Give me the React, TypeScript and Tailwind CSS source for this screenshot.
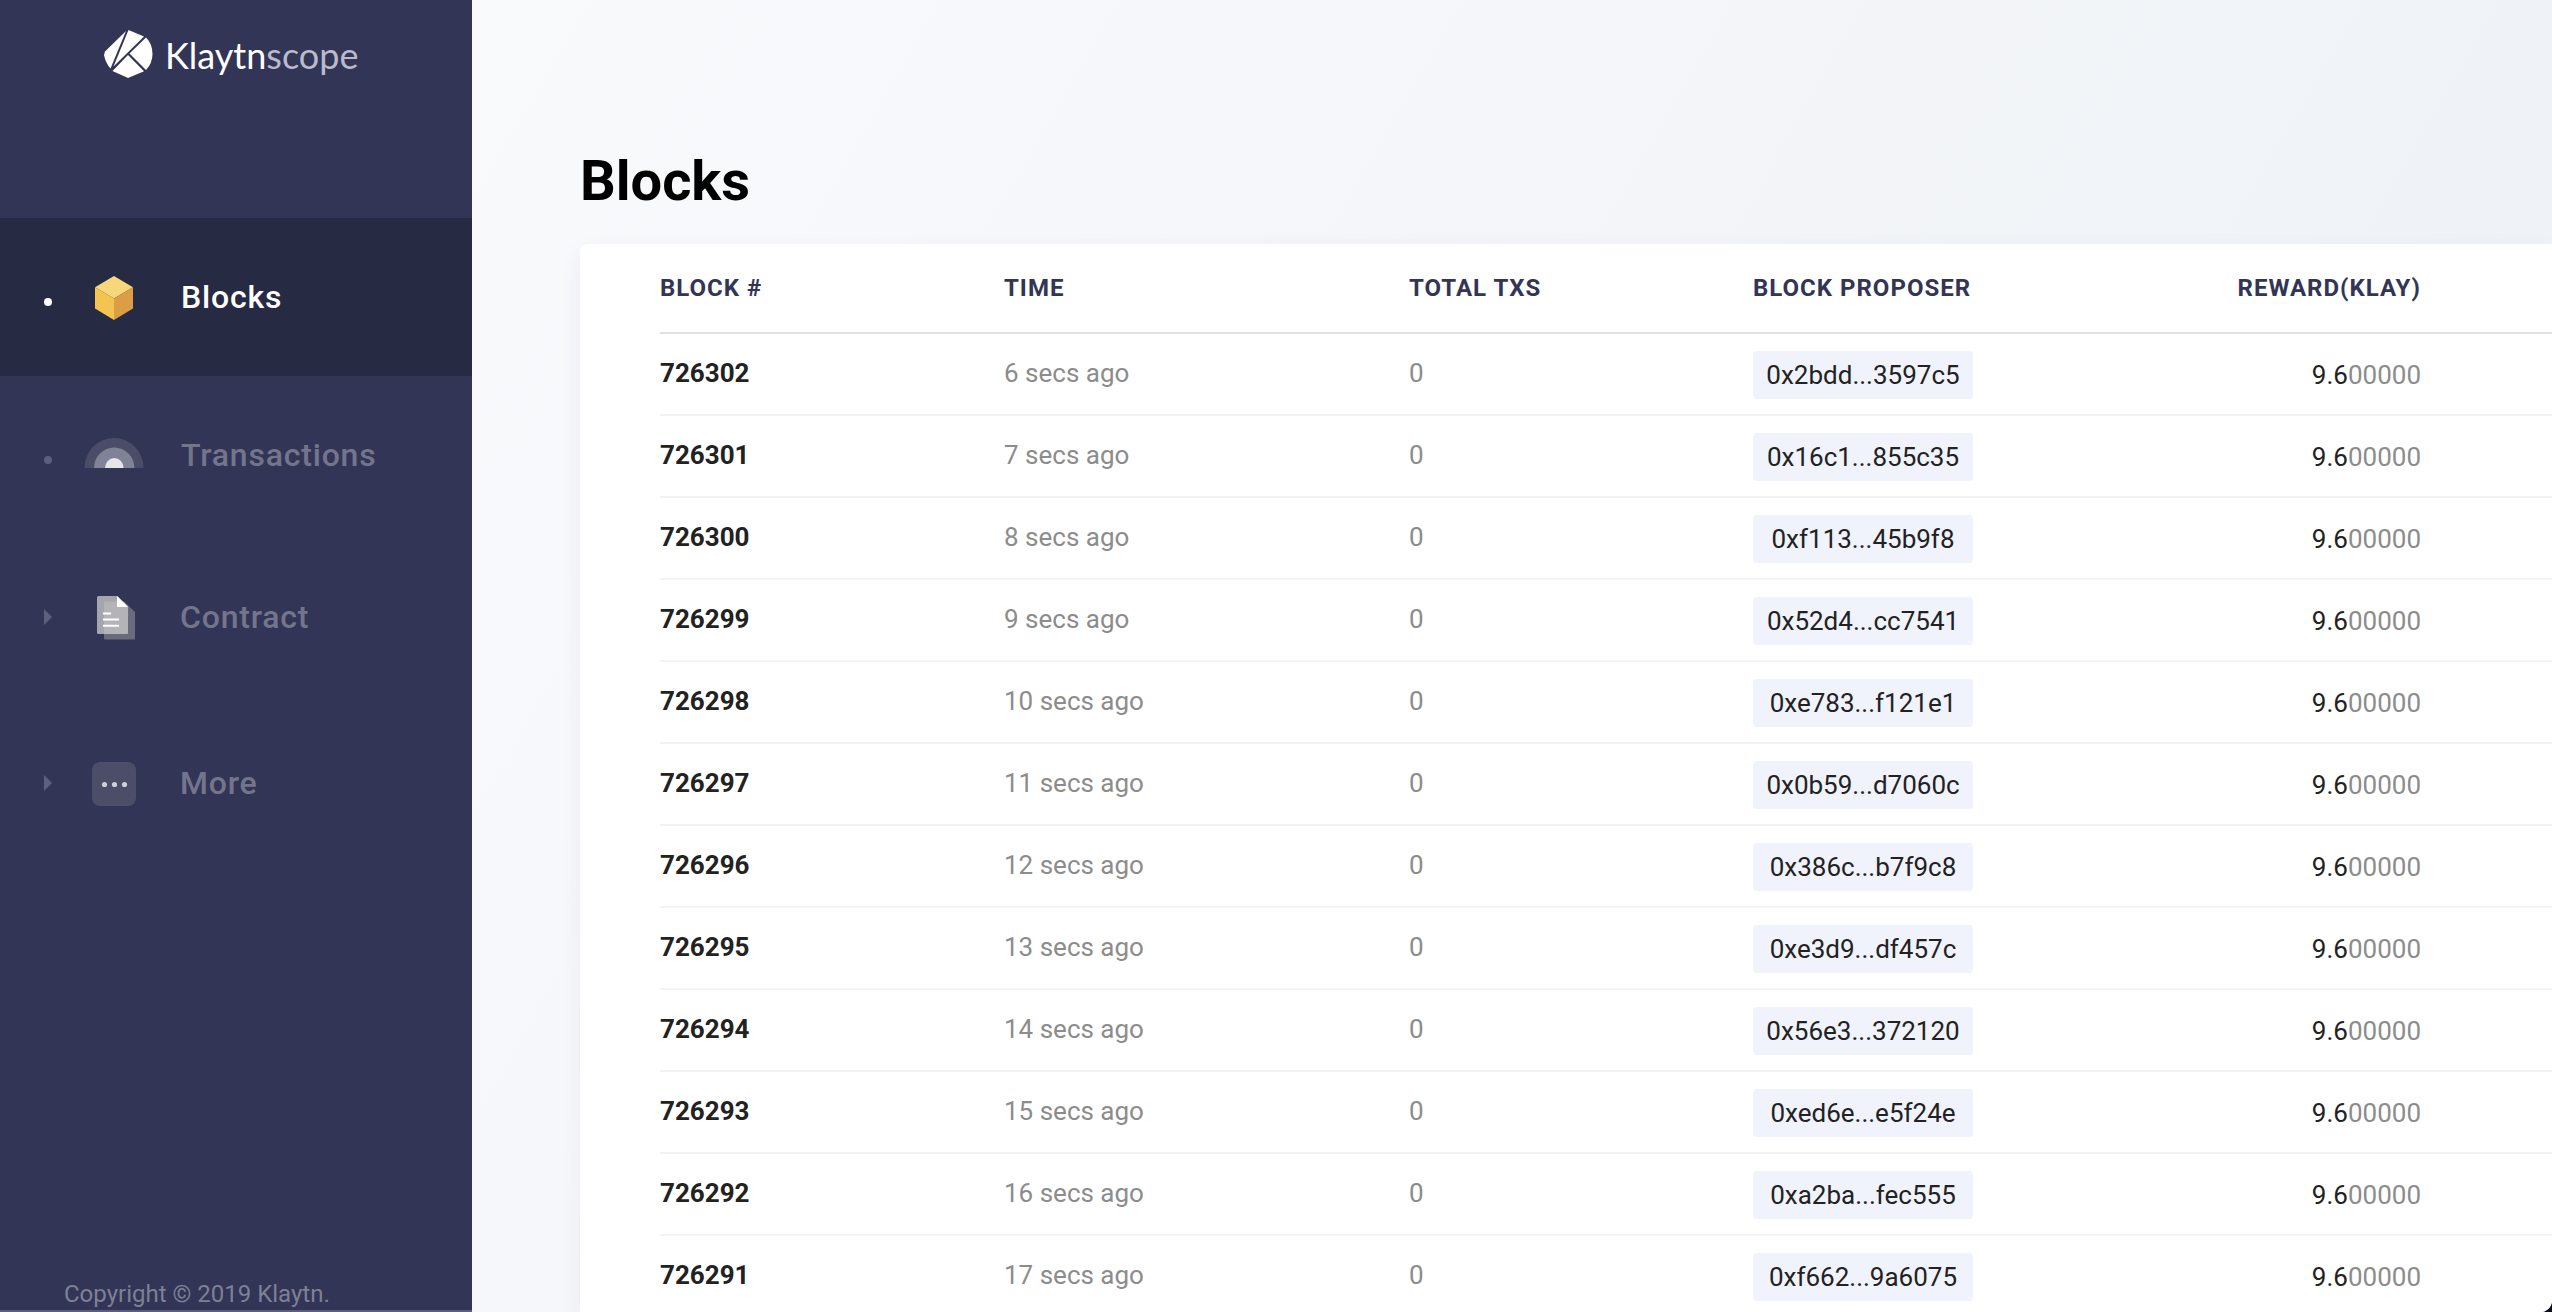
import type { ReactNode } from 'react';

interface Block {
  number: number;
  age: number;
  txs: number;
  proposer: string;
}

interface NavItemProps {
  label: string;
  icon: ReactNode;
  active?: boolean;
  expandable?: boolean;
}

const blocks: Block[] = [
  { number: 726302, age: 6, txs: 0, proposer: '0x2bdd...3597c5' },
  { number: 726301, age: 7, txs: 0, proposer: '0x16c1...855c35' },
  { number: 726300, age: 8, txs: 0, proposer: '0xf113...45b9f8' },
  { number: 726299, age: 9, txs: 0, proposer: '0x52d4...cc7541' },
  { number: 726298, age: 10, txs: 0, proposer: '0xe783...f121e1' },
  { number: 726297, age: 11, txs: 0, proposer: '0x0b59...d7060c' },
  { number: 726296, age: 12, txs: 0, proposer: '0x386c...b7f9c8' },
  { number: 726295, age: 13, txs: 0, proposer: '0xe3d9...df457c' },
  { number: 726294, age: 14, txs: 0, proposer: '0x56e3...372120' },
  { number: 726293, age: 15, txs: 0, proposer: '0xed6e...e5f24e' },
  { number: 726292, age: 16, txs: 0, proposer: '0xa2ba...fec555' },
  { number: 726291, age: 17, txs: 0, proposer: '0xf662...9a6075' },
];

const LogoMark = () => (
  <svg className="h-12 w-[49px]" viewBox="0 0 49 48" fill="#fff" aria-hidden="true">
    <path d="M22 1 L1 21.500 L0 25 Q1.500 33 6.500 38.500 Z" />
    <path d="M24.500 0 L40 6.500 L9.500 36.500 Z" />
    <path d="M42 7.500 Q48.500 14 48.500 24 Q48.500 33 42 40 L25.500 23.500 Z" />
    <path d="M24 25 L40 41.200 L24 48 L8.500 41 Z" />
  </svg>
);

const BlocksIcon = () => (
  <svg className="h-12 w-15" viewBox="0 0 60 48" aria-hidden="true">
    <path d="M30 3 L49 14.300 L30 25.600 L11 14.300 Z" fill="#f6d77c" />
    <path d="M11 14.300 L30 25.600 V47 L11 35.600 Z" fill="#f4c450" />
    <path d="M49 14.300 L30 25.600 V47 L49 35.600 Z" fill="#dc9d45" />
  </svg>
);

const TransactionsIcon = () => (
  <svg className="h-12 w-15" viewBox="0 0 60 48" aria-hidden="true">
    <path d="M0.500 37 A29.500 30 0 0 1 59.500 37 Z" fill="#4b4d68" />
    <path d="M10 37 A20.200 20.500 0 0 1 50.400 37 Z" fill="#808296" />
    <path d="M21 37 A9.300 10 0 0 1 39.600 37 Z" fill="#e4e4e9" />
  </svg>
);

const ContractIcon = () => (
  <svg className="h-12 w-15" viewBox="0 0 60 48" aria-hidden="true">
    <path d="M21 8.500 H40 L51 19 V45.500 Q51 46.500 50 46.500 H21 Q20 46.500 20 45.500 V9.500 Q20 8.500 21 8.500 Z" fill="#6a6c7d" />
    <path d="M14.500 3 H33.500 L44 13.500 V39.500 Q44 41 42.500 41 H14.500 Q13 41 13 39.500 V4.500 Q13 3 14.500 3 Z" fill="#a5a5ae" />
    <path d="M20 8.500 H39 L44 13.500 V39.500 Q44 41 42.500 41 H20 Z" fill="#b3b3b8" />
    <path d="M33 3 L44 14 H33 Z" fill="#fff" />
    <path d="M19 20.500 H27 M19 26.500 H35 M19 32.700 H35" stroke="#fff" strokeWidth="2" />
  </svg>
);

const MoreIcon = () => (
  <svg className="h-12 w-15" viewBox="0 0 60 48" aria-hidden="true">
    <rect x="8" y="3" width="44" height="44" rx="8" fill="#4c4d67" />
    <g fill="#cfcfd7">
      <circle cx="20.500" cy="25.500" r="2.600" />
      <circle cx="30.500" cy="25.500" r="2.600" />
      <circle cx="40.500" cy="25.500" r="2.600" />
    </g>
  </svg>
);

const NavItem = ({ label, icon, active, expandable }: NavItemProps) => (
  <li>
    <a
      href="#"
      className={`flex items-center pl-11 text-[32px] leading-10 font-medium tracking-wide ${
        active ? 'bg-[#272a43] text-white' : 'text-[#74758d]'
      } ${expandable ? 'h-[166px]' : 'h-[158px]'}`}
    >
      {expandable ? (
        <svg className="h-4 w-2" viewBox="0 0 8 16" fill="#5d607c" aria-hidden="true">
          <path d="M0 0 L8 8 L0 16 Z" />
        </svg>
      ) : (
        <span className={`mt-2.5 size-2 rounded-full ${active ? 'bg-white' : 'bg-[#5d607c]'}`} />
      )}
      <span className={expandable ? 'mr-9 ml-8' : 'mr-[37px] ml-8'}>{icon}</span>
      {label}
    </a>
  </li>
);

const Sidebar = () => (
  <aside className="flex w-[472px] shrink-0 flex-col border-b-2 border-[#5b5d7a] bg-[#323556]">
    <a href="#" className="flex h-[218px] items-start gap-3 pt-[30px] pl-[104px] text-white">
      <LogoMark />
      <span className="font-['Lato',sans-serif] text-[36px] leading-[50px]">
        Klaytn<span className="text-[#b9bacb]">scope</span>
      </span>
    </a>
    <nav className="flex-1">
      <ul>
        <NavItem label="Blocks" icon={<BlocksIcon />} active />
        <NavItem label="Transactions" icon={<TransactionsIcon />} />
        <NavItem label="Contract" icon={<ContractIcon />} expandable />
        <NavItem label="More" icon={<MoreIcon />} expandable />
      </ul>
    </nav>
    <footer className="pl-16 text-[24px] leading-8 text-[#7e8096]">Copyright © 2019 Klaytn.</footer>
  </aside>
);

const BlockRow = ({ number, age, txs, proposer }: Block) => (
  <tr className="h-[82px] border-b-2 border-[#f3f3f5]">
    <td className="pb-0.5 font-bold text-[#222]">{number}</td>
    <td className="pb-0.5">{age} secs ago</td>
    <td className="pb-0.5">{txs}</td>
    <td className="pt-0.5">
      <a href="#" className="flex h-12 w-[220px] items-center justify-center rounded bg-[#f0f3fc] text-[#222]">
        {proposer}
      </a>
    </td>
    <td className="pt-0.5 pr-[131px] text-right">
      <span className="text-[#222]">9.6</span>00000
    </td>
  </tr>
);

export default function App() {
  return (
    <div className="h-screen bg-[#0b0f1c] font-['Roboto',sans-serif]">
      <div className="flex h-full overflow-hidden rounded-br-[12px] bg-white">
        <Sidebar />
        <main className="min-w-0 flex-1 overflow-hidden bg-linear-120 from-[#f9fafc] to-[#ecf0f5] pt-[153px] pl-[108px]">
          <h1 className="mb-[35px] text-[56px] leading-[56px] font-bold text-black">Blocks</h1>
          <section className="rounded-tl-lg bg-white pl-20 shadow-[0_8px_24px_rgba(50,53,86,0.06)]">
            <table className="w-full table-fixed border-collapse text-[26px] leading-8 text-[#8c8c8c]">
              <thead>
                <tr className="h-[89px] border-b-2 border-[#e0e0e8] text-left text-[24px] tracking-[1px] text-[#323556]">
                  <th className="w-[344px]">BLOCK #</th>
                  <th className="w-[405px]">TIME</th>
                  <th className="w-[344px]">TOTAL TXS</th>
                  <th className="w-[344px]">BLOCK PROPOSER</th>
                  <th className="pr-[131px] text-right">REWARD(KLAY)</th>
                </tr>
              </thead>
              <tbody>
                {blocks.map((block) => (
                  <BlockRow key={block.number} {...block} />
                ))}
              </tbody>
            </table>
          </section>
        </main>
      </div>
    </div>
  );
}
